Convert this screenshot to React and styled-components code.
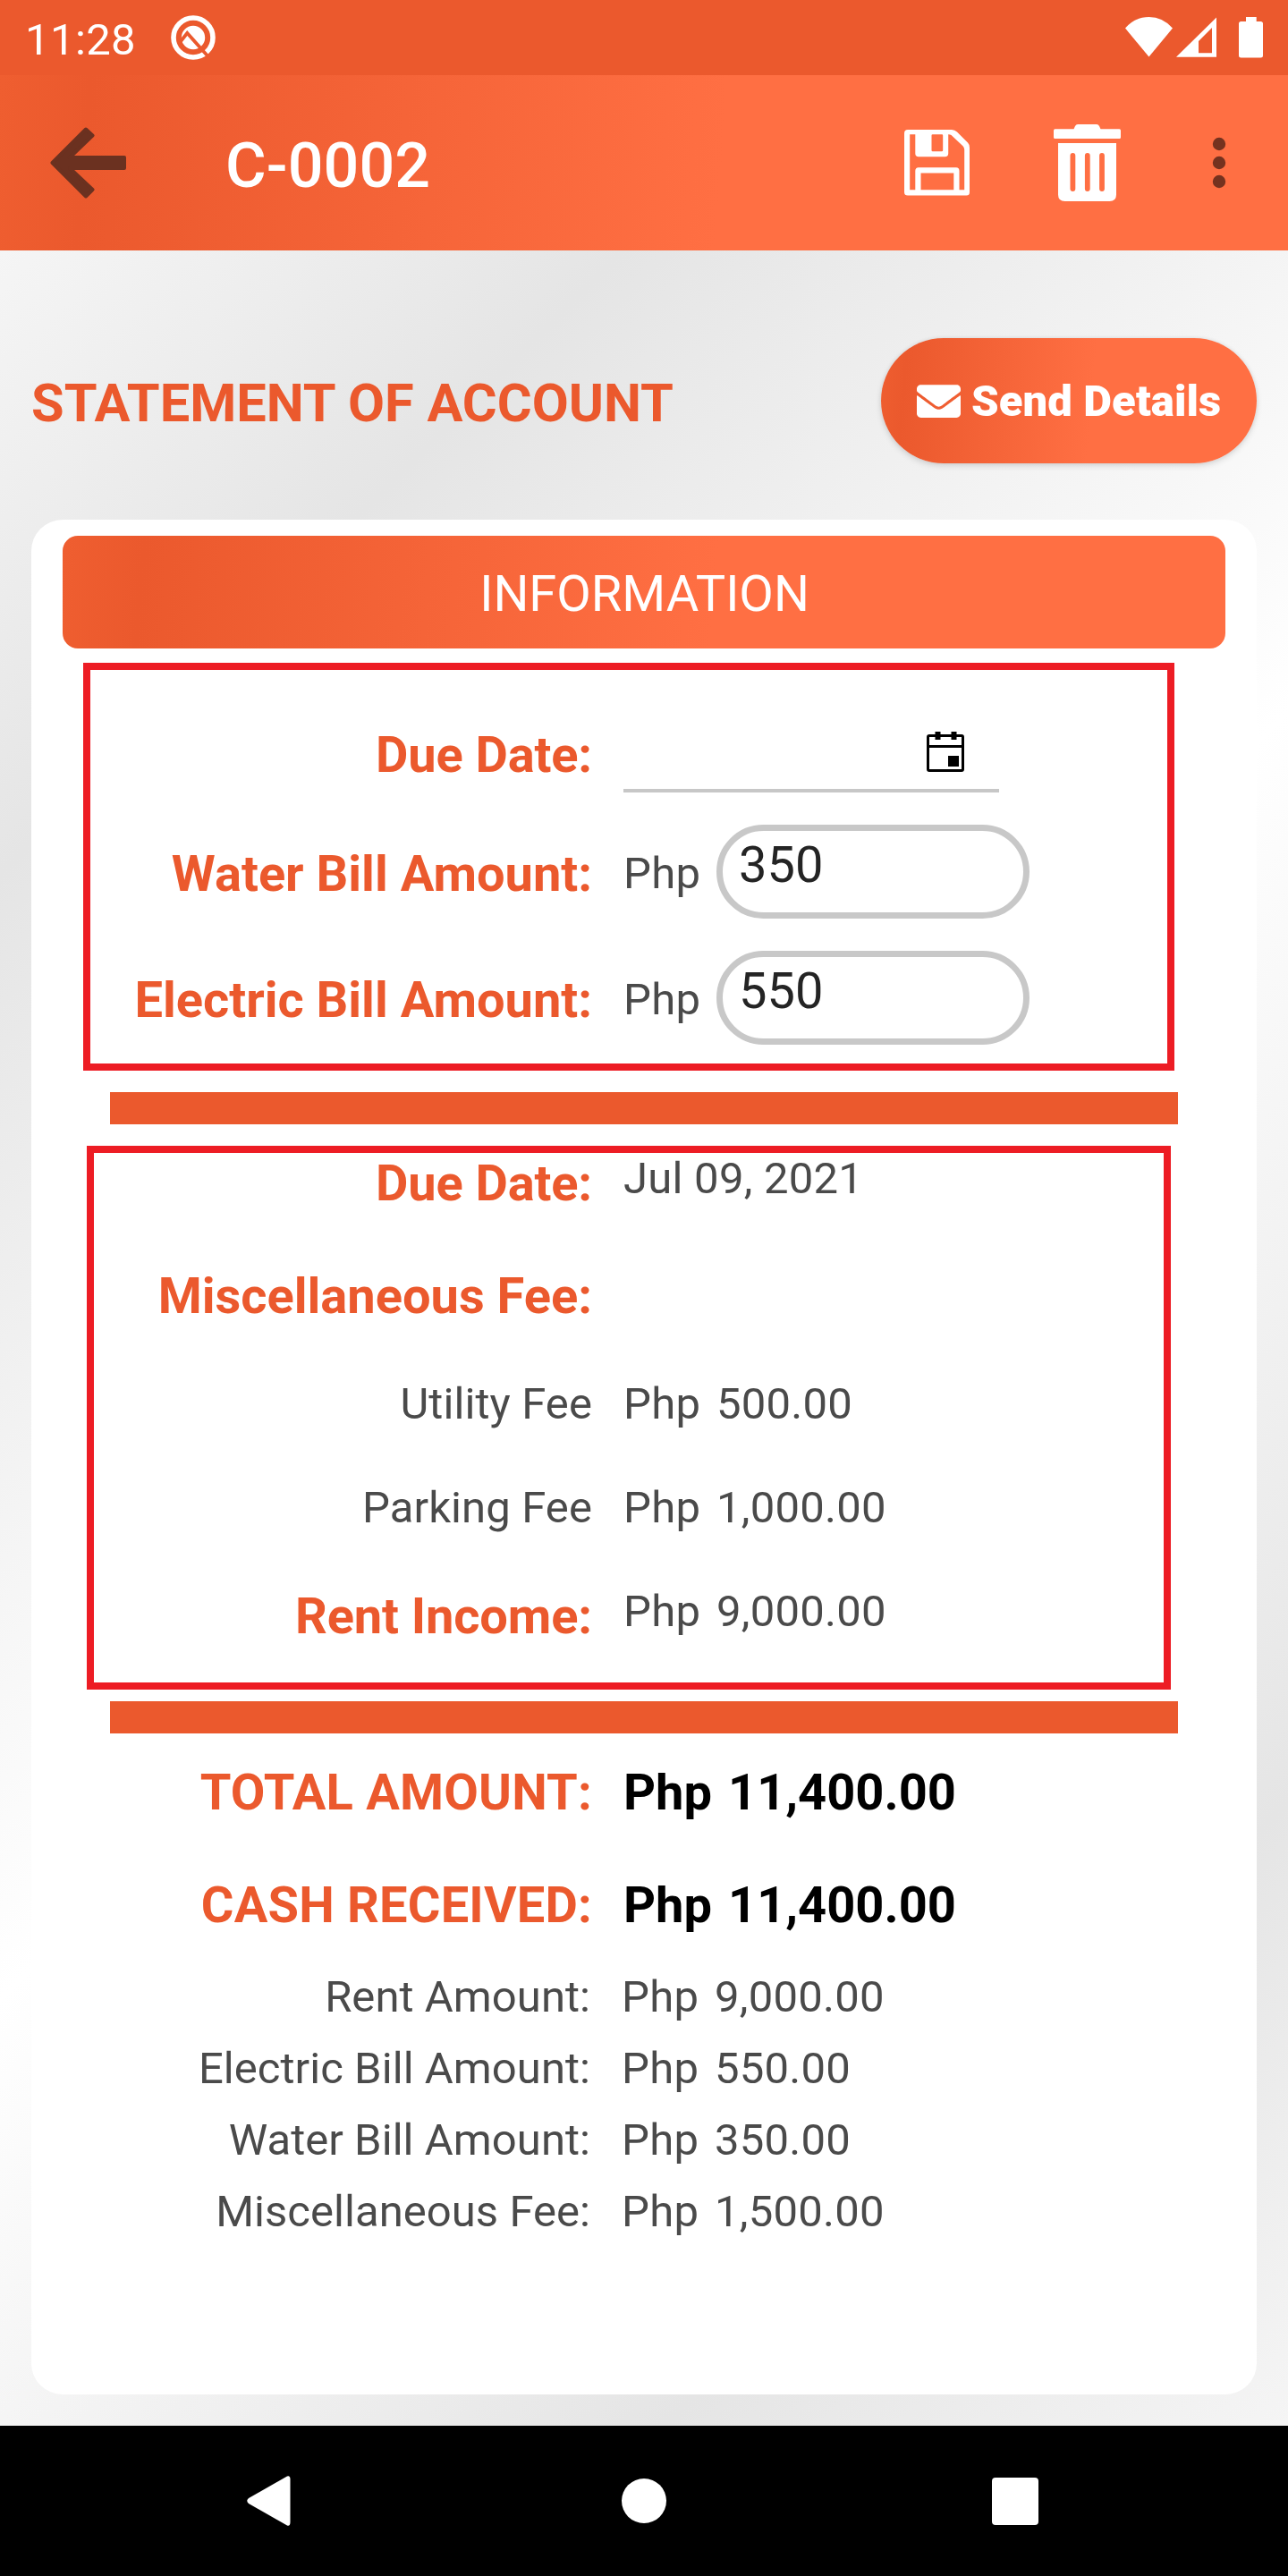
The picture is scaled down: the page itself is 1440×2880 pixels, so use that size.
import React from "react";
import styled, { createGlobalStyle, css } from "styled-components";

const ORANGE = "#eb592d";
const sweep = "linear-gradient(95deg, #ef5e30 0%, #eb592d 7%, #ff6f43 56%, #ff6f43 100%)";

const GlobalStyle = createGlobalStyle`
  * { box-sizing: border-box; }
  body { margin: 0; background: #000; font-family: Roboto, "Noto Sans", sans-serif; }
  svg { display: block; flex: none; }
`;

const Screen = styled.div`
  width: 1440px;
  height: 2880px;
  display: flex;
  flex-direction: column;
  overflow: hidden;
`;

const StatusBar = styled.div`
  height: 84px;
  flex: none;
  background: #eb592d;
  display: flex;
  align-items: center;
  padding: 0 28px 0 28px;
  color: #fff;
`;

const Clock = styled.span`
  width: 163px;
  padding-top: 5px;
  font-size: 49px;
  line-height: 56px;
  letter-spacing: 0.4px;
`;

const StatusIcons = styled.div`
  margin-left: auto;
  display: flex;
`;

const AppBar = styled.header`
  height: 196px;
  flex: none;
  background: ${sweep};
  display: flex;
  align-items: center;
  padding: 0 70px 0 56px;
`;

const AppTitle = styled.h1`
  margin: 0 auto 0 111px;
  padding-top: 6px;
  font-size: 70px;
  line-height: 80px;
  font-weight: 500;
  letter-spacing: 0.1px;
  color: #fff;
`;

const Actions = styled.div`
  display: flex;
  align-items: center;
`;

const Action = styled.div`
  margin-left: ${(p) => p.$space}px;
`;

const Content = styled.main`
  flex: 1;
  padding: 98px 35px 35px;
  display: flex;
  flex-direction: column;
  background: linear-gradient(135deg, #f5f5f5 0%, #e5e5e5 18%, #ffffff 50.5%, #e5e5e5 82%, #f5f5f5 100%);
`;

const PageHead = styled.div`
  height: 140px;
  margin-bottom: 63px;
  display: flex;
  align-items: center;
  justify-content: space-between;
`;

const PageTitle = styled.h2`
  margin: 0;
  padding-top: 5px;
  font-size: 59.5px;
  line-height: 70px;
  font-weight: 700;
  color: ${ORANGE};
`;

const SendButton = styled.button`
  width: 420px;
  height: 140px;
  border: 0;
  border-radius: 70px;
  padding: 0 0 0 40px;
  display: flex;
  align-items: center;
  gap: 12px;
  background: ${sweep};
  box-shadow: 0 3px 7px rgba(0, 0, 0, 0.12), 0 0 4px rgba(0, 0, 0, 0.08);
  color: #fff;
  font: 900 49px/56px Roboto, "Noto Sans", sans-serif;
  letter-spacing: 0.1px;
  white-space: nowrap;
`;

const ButtonLabel = styled.span`
  padding-top: 1px;
`;

const Card = styled.section`
  height: 2096px;
  border-radius: 35px;
  background: #fff;
  padding-top: 18px;
`;

const CardHeading = styled.h3`
  margin: 0 35px 16px;
  height: 126px;
  border-radius: 17px;
  background: ${sweep};
  color: #fff;
  font-size: 56px;
  line-height: 131px;
  font-weight: 400;
  text-align: center;
  text-indent: 1px;
`;

const OutlinedGroup = styled.div`
  margin-left: ${(p) => p.$left}px;
  width: ${(p) => p.$width}px;
  height: ${(p) => p.$height}px;
  border: 8px solid #ed1c24;
`;

const EntryRows = styled.div`
  padding-top: 53px;
  display: flex;
  flex-direction: column;
  gap: 36px;
`;

const Divider = styled.div`
  height: 36px;
  margin: ${(p) => p.$space};
  background: ${ORANGE};
`;

const Row = styled.div`
  display: grid;
  grid-template-columns: ${(p) => p.$label}px 1fr;
  column-gap: 35px;
  align-items: ${(p) => (p.$center ? "center" : "start")};
  height: ${(p) => p.$height}px;
`;

const Label = styled.span`
  text-align: right;
  white-space: nowrap;
  letter-spacing: ${(p) => p.$track || 0}px;
  ${(p) =>
    p.$plain
      ? css`
          font-size: 49px;
          line-height: 57px;
          color: #4a4a4a;
        `
      : css`
          font-size: 56px;
          line-height: 68px;
          font-weight: 700;
          color: ${ORANGE};
        `}
  padding-top: ${(p) => p.$drop || 0}px;
`;

const Value = styled.div`
  display: flex;
  align-items: ${(p) => (p.$center ? "center" : "start")};
  white-space: nowrap;
  ${(p) =>
    p.$strong
      ? css`
          font-size: 56px;
          line-height: 68px;
          font-weight: 700;
          color: #000;
        `
      : css`
          font-size: 49px;
          line-height: 57px;
          letter-spacing: 0.25px;
          color: #4a4a4a;
        `}
`;

const Currency = styled.span`
  width: ${(p) => (p.$strong ? 117 : 104)}px;
  padding-top: ${(p) => p.$drop || 0}px;
`;

const DateField = styled.div`
  width: 420px;
  height: 84px;
  padding: 16px 39px 0 0;
  border-bottom: 4px solid #c7c7c7;
  display: flex;
  justify-content: flex-end;
`;

const AmountField = styled.div`
  width: 350px;
  height: 105px;
  border: 7px solid #c8c8c8;
  border-radius: 53px;
  padding: 5px 17px 0 18px;
`;

const AmountText = styled.div`
  font-size: 56px;
  line-height: 66px;
  letter-spacing: 0;
  color: #242424;
`;

const Totals = styled.div`
  padding-top: 32px;
`;

const Breakdown = styled.div`
  margin-left: -2px;
`;

const NavBar = styled.nav`
  height: 168px;
  flex: none;
  background: #000;
  display: flex;
  align-items: center;
  padding-left: 276px;
`;

const NavKey = styled.div`
  margin-right: ${(p) => p.$space || 0}px;
`;

const BackArrow = () => (
  <svg width="85" height="80" viewBox="56 142 85 80" fill="#6b3120">
    <path
      d="M58.5 182 96 144.500 103.500 151.500 78 176 H139 V188 H78 L103.500 212 96 219.500Z"
      stroke="#6b3120"
      strokeWidth="4"
      strokeLinejoin="round"
    />
  </svg>
);

const QBadge = () => (
  <svg width="50" height="50" viewBox="190.500 17 50 50" fill="none">
    <circle cx="215.500" cy="42" r="22" stroke="#fff" strokeWidth="5.600" />
    <circle cx="215.500" cy="42" r="13.200" fill="#fff" />
    <path d="M200.500 47.500 208.800 37 232 63" stroke={ORANGE} strokeWidth="3.800" />
  </svg>
);

const StatusGlyphs = () => (
  <svg width="154" height="48" viewBox="1258 18 154 48" fill="#fff">
    <path d="M1258 31.500Q1269 19 1284.500 19T1311 31.500L1284.500 63.500Z" />
    <path fillRule="evenodd" d="M1315 63.700 1360 19.500V63.700ZM1340 46V59.200H1355V31Z" />
    <path d="M1393 24V19H1404.700V24H1409.500Q1412 24 1412 26.500V62Q1412 64.500 1409.500 64.500H1387.500Q1385 64.500 1385 62V26.500Q1385 24 1387.500 24Z" />
  </svg>
);

const SaveIcon = () => (
  <svg width="73" height="74" viewBox="1011 145 73 74" fill="#fff" fillRule="evenodd">
    <path d="M1015 145H1064Q1067.500 145 1070 147.500L1082 159.500Q1084 161.500 1084 165V215Q1084 218.500 1080.500 218.500H1015Q1011 218.500 1011 215V149Q1011 145 1015 145ZM1017.200 150.300V212.200H1023.300V191Q1023.300 187.200 1027 187.200H1069Q1072.500 187.200 1072.500 191V212.200H1078.200V167Q1078 165 1076.500 163.300L1063.500 151Q1062 150.200 1060.200 150.300V171.500Q1060.200 175.300 1056.500 175.300H1027Q1023.300 175.300 1023.300 171.500V150.300ZM1041.500 151.500V168Q1041.500 169.200 1042.700 169.200H1053Q1054.200 169.200 1054.200 168V151.500Q1054.200 150.300 1053 150.300H1042.700Q1041.500 150.300 1041.500 151.500ZM1029.500 193.400V212.200H1066.300V193.400Z" />
  </svg>
);

const TrashIcon = () => (
  <svg width="75" height="86" viewBox="1178 139 75 86" fill="#fff">
    <path d="M1179.500 144.300H1200.500L1202 141Q1203 139 1205 139H1226Q1228 139 1229 141L1230.500 144.300H1251.500Q1253 144.300 1253 146V153.500Q1253 155 1251.500 155H1179.500Q1178 155 1178 153.500V146Q1178 144.300 1179.500 144.300Z" />
    <path d="M1183 160H1248V217.500Q1248 225 1240.500 225H1190.500Q1183 225 1183 217.500Z" />
    <path d="M1199.400 174V211M1215.800 174V211M1232 174V211" stroke="#ff6f43" strokeWidth="5.800" strokeLinecap="round" />
  </svg>
);

const MoreIcon = () => (
  <svg width="14" height="58" viewBox="0 0 14 58" fill="#75321f" overflow="visible">
    <circle cx="7" cy="8" r="7.200" />
    <circle cx="7" cy="29" r="7.200" />
    <circle cx="7" cy="50" r="7.200" />
  </svg>
);

const EnvelopeIcon = () => (
  <svg width="49" height="37" viewBox="0 64 512 384" fill="#fff">
    <path d="M502.300 190.800c3.900-3.100 9.700-.2 9.700 4.700V400c0 26.500-21.500 48-48 48H48c-26.500 0-48-21.500-48-48V195.600c0-5 5.700-7.800 9.700-4.700 22.400 17.400 52.100 39.500 154.100 113.600 21.100 15.400 56.700 47.800 92.200 47.600 35.700.3 72-32.800 92.300-47.600 102-74.100 131.600-96.300 154-113.700zM256 320c23.200.4 56.600-29.200 73.400-41.400 132.700-96.300 142.800-104.700 173.400-128.700 5.800-4.500 9.200-11.500 9.200-18.900v-19c0-26.500-21.500-48-48-48H48c-26.500 0-48 21.500-48 48v19c0 7.400 3.400 14.300 9.200 18.900 30.600 23.900 40.700 32.400 173.400 128.700 16.800 12.200 50.200 41.800 73.400 41.400z" />
  </svg>
);

const CalendarIcon = () => (
  <svg width="42" height="45" viewBox="0 0 42 45">
    <rect x="1.500" y="4.500" width="39" height="39" rx="1.500" fill="none" stroke="#000" strokeWidth="3" />
    <path d="M9.500 0h6v9h-6zM27.500 0h6v9h-6zM1 15h40v3H1zM24 27h12v12H24z" />
  </svg>
);

const money = (value, strong) => (
  <Value $strong={strong}>
    <Currency $strong={strong}>Php</Currency>
    <span>{value}</span>
  </Value>
);

const entries = [
  ["Water Bill Amount:", "350"],
  ["Electric Bill Amount:", "550"],
];

const fees = [
  ["Utility Fee", "500.00"],
  ["Parking Fee", "1,000.00"],
];

const breakdown = [
  ["Rent Amount:", "9,000.00"],
  ["Electric Bill Amount:", "550.00"],
  ["Water Bill Amount:", "350.00"],
  ["Miscellaneous Fee:", "1,500.00"],
];

export default function App() {
  return (
    <Screen>
      <GlobalStyle />
      <StatusBar>
        <Clock>11:28</Clock>
        <QBadge />
        <StatusIcons>
          <StatusGlyphs />
        </StatusIcons>
      </StatusBar>

      <AppBar>
        <BackArrow />
        <AppTitle>C-0002</AppTitle>
        <Actions>
          <SaveIcon />
          <Action $space={94}>
            <TrashIcon />
          </Action>
          <Action $space={103}>
            <MoreIcon />
          </Action>
        </Actions>
      </AppBar>

      <Content>
        <PageHead>
          <PageTitle>STATEMENT OF ACCOUNT</PageTitle>
          <SendButton>
            <EnvelopeIcon />
            <ButtonLabel>Send Details</ButtonLabel>
          </SendButton>
        </PageHead>

        <Card>
          <CardHeading>INFORMATION</CardHeading>

          <OutlinedGroup $left={58} $width={1220} $height={456}>
            <EntryRows>
              <Row $label={561} $height={84} $center>
                <Label $track={-0.15}>Due Date:</Label>
                <DateField>
                  <CalendarIcon />
                </DateField>
              </Row>
              {entries.map(([label, value]) => (
                <Row key={label} $label={561} $height={105} $center>
                  <Label $drop={5}>{label}</Label>
                  <Value $center>
                    <Currency $drop={4}>Php</Currency>
                    <AmountField>
                      <AmountText>{value}</AmountText>
                    </AmountField>
                  </Value>
                </Row>
              ))}
            </EntryRows>
          </OutlinedGroup>

          <Divider $space="24px 88px" />

          <OutlinedGroup $left={62} $width={1212} $height={608}>
            <Row $label={557} $height={126}>
              <Label $track={-0.15}>Due Date:</Label>
              <Value>Jul 09, 2021</Value>
            </Row>
            <Row $label={557} $height={126}>
              <Label>Miscellaneous Fee:</Label>
            </Row>
            {fees.map(([label, value]) => (
              <Row key={label} $label={557} $height={116}>
                <Label $plain $track={0.1}>
                  {label}
                </Label>
                {money(value)}
              </Row>
            ))}
            <Row $label={557} $height={108}>
              <Label $track={-0.12}>Rent Income:</Label>
              {money("9,000.00")}
            </Row>
          </OutlinedGroup>

          <Divider $space="13px 88px 0" />

          <Totals>
            <Row $label={627} $height={126}>
              <Label $track={0.2}>TOTAL AMOUNT:</Label>
              {money("11,400.00", true)}
            </Row>
            <Row $label={627} $height={108}>
              <Label $track={0.2}>CASH RECEIVED:</Label>
              {money("11,400.00", true)}
            </Row>
            <Breakdown>
              {breakdown.map(([label, value]) => (
                <Row key={label} $label={627} $height={80}>
                  <Label $plain $track={0.05}>
                    {label}
                  </Label>
                  {money(value)}
                </Row>
              ))}
            </Breakdown>
          </Totals>
        </Card>
      </Content>

      <NavBar>
        <NavKey $space={370}>
          <svg width="49" height="56" viewBox="0 0 49 56" fill="#fff">
            <path d="M45 .500Q48.500-.500 48.500 4V52Q48.500 56.500 45 55.500L2 31Q-1.500 28 2 25Z" />
          </svg>
        </NavKey>
        <NavKey $space={364}>
          <svg width="50" height="50" viewBox="0 0 50 50" fill="#fff">
            <circle cx="25" cy="25" r="25" />
          </svg>
        </NavKey>
        <NavKey>
          <svg width="52" height="53" viewBox="0 0 52 53" fill="#fff">
            <rect width="52" height="53" rx="4" />
          </svg>
        </NavKey>
      </NavBar>
    </Screen>
  );
}
